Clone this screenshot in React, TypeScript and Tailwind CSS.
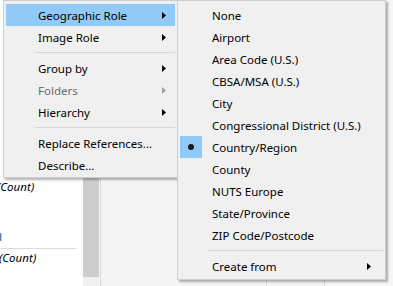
import React from "react";

const font = { fontFamily: '"Noto Sans", "Liberation Sans", sans-serif' };

function Arrow({ gray = false }: { gray?: boolean }) {
  return (
    <svg width="4" height="7" viewBox="0 0 4 7" className="block">
      <path d="M0 0 L4 3.5 L0 7 Z" fill={gray ? "#a0a0a0" : "#000"} />
    </svg>
  );
}

type MainItem = { label?: string; arrow?: boolean; disabled?: boolean; hover?: boolean; sep?: boolean };

const mainItems: MainItem[] = [
  { label: "Geographic Role", arrow: true, hover: true },
  { label: "Image Role", arrow: true },
  { sep: true },
  { label: "Group by", arrow: true },
  { label: "Folders", arrow: true, disabled: true },
  { label: "Hierarchy", arrow: true },
  { sep: true },
  { label: "Replace References..." },
  { label: "Describe..." },
];

const subItems = [
  "None",
  "Airport",
  "Area Code (U.S.)",
  "CBSA/MSA (U.S.)",
  "City",
  "Congressional District (U.S.)",
  "Country/Region",
  "County",
  "NUTS Europe",
  "State/Province",
  "ZIP Code/Postcode",
];

export default function App() {
  return (
    <div className="relative w-[393px] h-[286px] overflow-hidden bg-[#f4f4f4] text-[11.5px] text-black" style={font}>
      {/* background */}
      <div className="flex h-full">
        <div className="w-[83px] bg-white flex flex-col">
          <div className="h-[178px]" />
          <div className="h-[18px] flex items-center -ml-[3px] italic">(Count)</div>
          <div className="h-[32px]" />
          <div className="h-[18px] flex items-center -ml-[5px] text-[#1a5fb4]">d</div>
          <div className="h-[2px]" />
          <div className="w-[76px] h-px bg-[#dcdcdc]" />
          <div className="h-[18px] flex items-center -ml-[1px] italic">(Count)</div>
        </div>
        <div className="w-[16px] flex flex-col">
          <div className="h-[277px] bg-[#cdcdcd]" />
          <div className="flex-1 bg-[#f0f0f0]" />
        </div>
        <div className="w-px bg-[#f8f8f8]" />
        <div className="w-px bg-[#d4d4d4]" />
        <div className="w-[166px] bg-[#f4f4f4] border-r border-[#dadada]" />
        <div className="w-[58px] bg-[#f4f4f4] border-r border-[#dadada]" />
        <div className="flex-1 bg-[#f6f6f6]" />
      </div>

      {/* main menu */}
      <div className="absolute left-[3px] top-0 w-[175px] h-[178px] bg-[#f0f0f0] border border-[#cfcfcf] px-[2px] py-[3px] shadow-[2px_2px_2px_rgba(0,0,0,0.3)]">
        {mainItems.map((it, i) =>
          it.sep ? (
            <div key={i} className="h-[9px] flex items-center pl-[29px]">
              <div className="h-px w-full bg-[#d7d7d7]" />
            </div>
          ) : (
            <div
              key={i}
              className={`h-[22px] flex items-center pl-[32px] pr-[9px] ${it.hover ? "bg-[#91c9f7]" : ""} ${it.disabled ? "text-[#6d6d6d]" : ""}`}
            >
              <span className="flex-1 whitespace-nowrap pt-px">{it.label}</span>
              {it.arrow && <Arrow gray={it.disabled} />}
            </div>
          )
        )}
      </div>

      {/* submenu */}
      <div className="absolute left-[177px] top-0 w-[209px] h-[280px] bg-[#f0f0f0] border border-[#cfcfcf] px-[2px] py-[3px] shadow-[2px_2px_2px_rgba(0,0,0,0.3)]">
        {subItems.map((s) => (
          <div key={s} className="h-[22px] flex items-center">
            <div className={`w-[22px] h-[22px] flex items-center justify-center ${s === "Country/Region" ? "bg-[#91c9f7]" : ""}`}>
              {s === "Country/Region" && <div className="w-[6px] h-[6px] rounded-full bg-[#1a1a1a]" />}
            </div>
            <span className="pl-[10px] whitespace-nowrap pt-px">{s}</span>
          </div>
        ))}
        <div className="h-[9px] flex items-center pl-[28px] pr-[0px]">
          <div className="h-px w-full bg-[#d7d7d7]" />
        </div>
        <div className="h-[22px] flex items-center pl-[32px] pr-[12px]">
          <span className="flex-1 whitespace-nowrap pt-px">Create from</span>
          <Arrow />
        </div>
      </div>
    </div>
  );
}
